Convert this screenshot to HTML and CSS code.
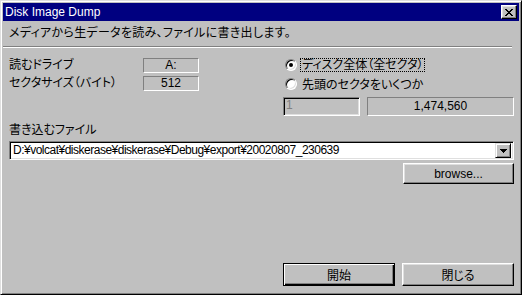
FILE: index.html
```html
<!DOCTYPE html>
<html lang="ja">

<head>
  <meta charset="UTF-8" />
  <title>Disk Image Dump</title>
  <link rel="stylesheet" href="styles.css">
</head>

<body>
  <div class="window">
    <div class="titlebar">
      <span class="title">Disk Image Dump</span>
      <span class="close-btn">
        <svg width="8" height="7" viewBox="0 0 8 7" shape-rendering="crispEdges">
          <path d="M0 0h2v1h-2zM6 0h2v1h-2zM1 1h2v1h-2zM5 1h2v1h-2zM2 2h4v1h-4zM3 3h2v1h-2zM2 4h4v1h-4zM1 5h2v1h-2zM5 5h2v1h-2zM0 6h2v1h-2zM6 6h2v1h-2z" fill="#000" />
        </svg>
      </span>
    </div>

    <div class="content">
      <p class="desc">メディアから生データを読み、ファイルに書き出します。</p>
      <div class="separator"></div>

      <div class="top">
        <div class="info">
          <span class="label">読むドライブ</span>
          <span class="static">A:</span>
          <span class="label">セクタサイズ（バイト）</span>
          <span class="static">512</span>
        </div>

        <div class="range">
          <div class="radio-row">
            <span class="radio checked"></span>
            <span class="focus">ディスク全体（全セクタ）</span>
          </div>
          <div class="radio-row">
            <span class="radio"></span>
            <span class="radio-text">先頭のセクタをいくつか</span>
          </div>
          <div class="count-row">
            <span class="edit disabled">1</span>
            <span class="static wide">1,474,560</span>
          </div>
        </div>
      </div>

      <div class="file-label">書き込むファイル</div>
      <div class="combo">
        <span class="combo-text">D:¥volcat¥diskerase¥diskerase¥Debug¥export¥20020807_230639</span>
        <span class="drop-btn">
          <svg width="7" height="4" viewBox="0 0 7 4" shape-rendering="crispEdges">
            <path d="M0 0h7v1h-7zM1 1h5v1h-5zM2 2h3v1h-3zM3 3h1v1h-1z" fill="#000" />
          </svg>
        </span>
      </div>
      <div class="browse-row">
        <button class="btn browse">browse...</button>
      </div>

      <div class="actions">
        <button class="btn default">開始</button>
        <button class="btn">閉じる</button>
      </div>
    </div>
  </div>
</body>

</html>
```

FILE: styles.css
```css
* {
  margin: 0;
  padding: 0;
  box-sizing: border-box;
}

body {
  background: #c0c0c0;
  font-family: "Liberation Sans", "Noto Sans CJK JP", sans-serif;
  font-size: 12px;
  font-feature-settings: "palt";
  color: #000;
}

/**
 * window frame
 */
.window {
  width: 522px;
  height: 295px;
  display: flex;
  flex-direction: column;
  padding: 2px;
  background: #c0c0c0;
  border: 1px solid;
  border-color: #dfdfdf #000 #000 #dfdfdf;
  box-shadow: inset 1px 1px #fff, inset -1px -1px #808080;
}

.titlebar {
  height: 18px;
  display: flex;
  align-items: center;
  justify-content: space-between;
  padding: 0 2px;
  background: #000080;
  color: #fff;
}

.title {
  line-height: 14px;
}

.close-btn {
  width: 16px;
  height: 14px;
  display: flex;
  align-items: center;
  justify-content: center;
  background: #c0c0c0;
  border: 1px solid;
  border-color: #fff #000 #000 #fff;
  box-shadow: inset -1px -1px #808080, inset 1px 1px #dfdfdf;
}

/**
 * body
 */
.content {
  flex: 1;
  display: flex;
  flex-direction: column;
  padding: 0 5px 6px 6px;
}

.desc {
  margin-top: 5px;
  line-height: 14px;
  letter-spacing: 0.3px;
}

.separator {
  height: 2px;
  margin: 6px 2px 0 -6px;
  border-top: 1px solid #808080;
  border-bottom: 1px solid #fff;
}

.top {
  display: flex;
}

.info {
  width: 274px;
  padding-top: 10px;
  display: grid;
  grid-template-columns: 134px 56px;
  row-gap: 3px;
  align-content: start;
}

.label {
  line-height: 15px;
}

.static {
  height: 15px;
  line-height: 13px;
  text-align: center;
  border: 1px solid;
  border-color: #808080 #fff #fff #808080;
}

.range {
  flex: 1;
  padding-top: 7px;
}

.radio-row {
  height: 19px;
  display: flex;
  align-items: center;
  padding-left: 2px;
}

.radio {
  position: relative;
  width: 12px;
  height: 12px;
  margin-right: 3px;
  border-radius: 50%;
  background: #fff;
  border: 1px solid;
  border-color: #808080 #fff #fff #808080;
  box-shadow: inset 1px 1px #000, inset -1px -1px #dfdfdf;
}

.radio.checked::after {
  content: "";
  position: absolute;
  left: 3px;
  top: 3px;
  width: 4px;
  height: 4px;
  border-radius: 50%;
  background: #000;
}

.focus {
  line-height: 12px;
  padding: 0 1px;
  border: 1px dotted #000;
}

.radio-text {
  padding-left: 2px;
}

.count-row {
  display: flex;
  gap: 7px;
  margin-top: 4px;
}

.edit {
  width: 77px;
  height: 19px;
  line-height: 15px;
  padding-left: 2px;
  border: 1px solid;
  border-color: #808080 #fff #fff #808080;
  box-shadow: inset 1px 1px #000, inset -1px -1px #dfdfdf;
}

.edit.disabled {
  color: #808080;
}

.static.wide {
  flex: 1;
  height: 19px;
  line-height: 17px;
}

/**
 * file
 */
.file-label {
  margin-top: 7px;
  line-height: 14px;
}

.combo {
  height: 19px;
  margin-top: 4px;
  display: flex;
  align-items: center;
  padding: 2px;
  background: #fff;
  border: 1px solid;
  border-color: #808080 #fff #fff #808080;
  box-shadow: inset 1px 1px #000, inset -1px -1px #dfdfdf;
}

.combo-text {
  flex: 1;
  padding-left: 1px;
  line-height: 15px;
  letter-spacing: -0.5px;
  white-space: nowrap;
  overflow: hidden;
}

.drop-btn {
  width: 16px;
  height: 15px;
  display: flex;
  align-items: center;
  justify-content: center;
  background: #c0c0c0;
  border: 1px solid;
  border-color: #dfdfdf #000 #000 #dfdfdf;
  box-shadow: inset 1px 1px #fff, inset -1px -1px #808080;
}

.browse-row {
  display: flex;
  justify-content: flex-end;
  margin-top: 3px;
}

/**
 * buttons
 */
.btn {
  width: 112px;
  height: 23px;
  font: inherit;
  color: #000;
  background: #c0c0c0;
  border: 1px solid;
  border-color: #fff #000 #000 #fff;
  box-shadow: inset -1px -1px #808080, inset 1px 1px #dfdfdf;
}

.btn.browse {
  width: 111px;
  height: 21px;
}

.btn.default {
  border-color: #000;
  box-shadow: inset 1px 1px #fff, inset -1px -1px #000, inset -2px -2px #808080;
}

.actions {
  display: flex;
  justify-content: flex-end;
  gap: 7px;
  margin-top: auto;
}
```
